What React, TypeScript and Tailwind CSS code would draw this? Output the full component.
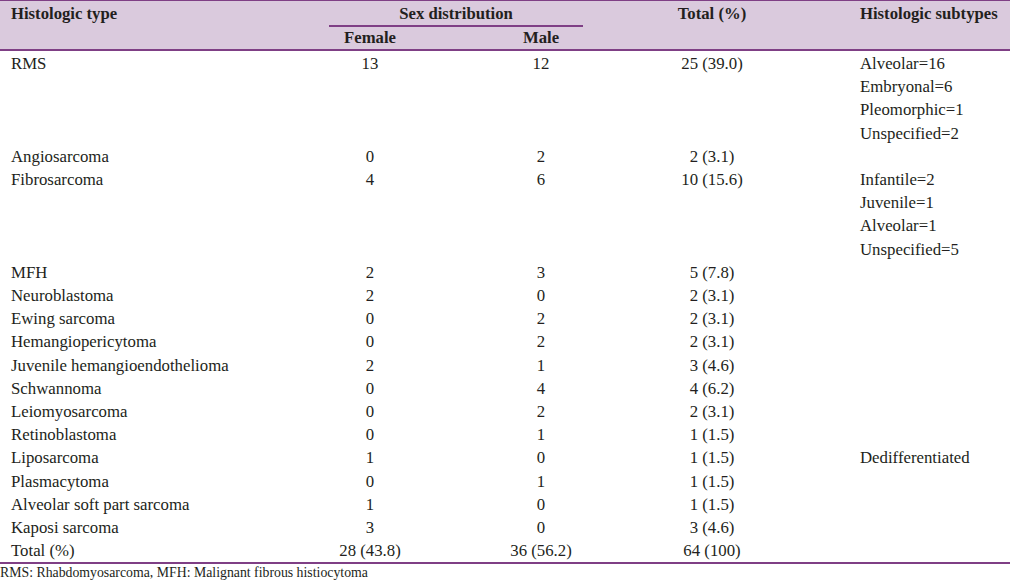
import React from "react";

const ROWS = [
  { type: "RMS", female: "13", male: "12", total: "25 (39.0)", sub: ["Alveolar=16", "Embryonal=6", "Pleomorphic=1", "Unspecified=2"] },
  { type: "Angiosarcoma", female: "0", male: "2", total: "2 (3.1)", sub: [] },
  { type: "Fibrosarcoma", female: "4", male: "6", total: "10 (15.6)", sub: ["Infantile=2", "Juvenile=1", "Alveolar=1", "Unspecified=5"] },
  { type: "MFH", female: "2", male: "3", total: "5 (7.8)", sub: [] },
  { type: "Neuroblastoma", female: "2", male: "0", total: "2 (3.1)", sub: [] },
  { type: "Ewing sarcoma", female: "0", male: "2", total: "2 (3.1)", sub: [] },
  { type: "Hemangiopericytoma", female: "0", male: "2", total: "2 (3.1)", sub: [] },
  { type: "Juvenile hemangioendothelioma", female: "2", male: "1", total: "3 (4.6)", sub: [] },
  { type: "Schwannoma", female: "0", male: "4", total: "4 (6.2)", sub: [] },
  { type: "Leiomyosarcoma", female: "0", male: "2", total: "2 (3.1)", sub: [] },
  { type: "Retinoblastoma", female: "0", male: "1", total: "1 (1.5)", sub: [] },
  { type: "Liposarcoma", female: "1", male: "0", total: "1 (1.5)", sub: ["Dedifferentiated"] },
  { type: "Plasmacytoma", female: "0", male: "1", total: "1 (1.5)", sub: [] },
  { type: "Alveolar soft part sarcoma", female: "1", male: "0", total: "1 (1.5)", sub: [] },
  { type: "Kaposi sarcoma", female: "3", male: "0", total: "3 (4.6)", sub: [] },
  { type: "Total (%)", female: "28 (43.8)", male: "36 (56.2)", total: "64 (100)", sub: [] },
];

const COLS = "grid grid-cols-[320px_100px_70px_102px_240px_1fr]";

export default function App() {
  return (
    <div className="w-[1010px] h-[581px] overflow-hidden bg-white text-[#231f20] text-[16.8px] font-['Liberation_Serif','Times_New_Roman',serif]">
      {/* Header */}
      <div className="bg-[#dacadd] border-t border-b-2 border-[#7f3f85] font-bold text-[16.7px]">
        <div className={`${COLS} h-[25px] leading-[23px]`}>
          <div className="pl-[11px] pt-[1px]">Histologic type</div>
          <div className="col-span-3 mx-[9px] pt-[1px] text-center border-b-2 border-[#7f3f85]">
            Sex distribution
          </div>
          <div className="pt-[1px] text-center">Total (%)</div>
          <div className="pl-[28px] pt-[1px]">Histologic subtypes</div>
        </div>
        <div className={`${COLS} h-[23px] leading-[23px]`}>
          <div />
          <div className="text-center">Female</div>
          <div />
          <div className="text-center">Male</div>
          <div />
          <div />
        </div>
      </div>

      {/* Body */}
      <div className="border-b-2 border-[#7f3f85] leading-[23.2px] pt-[1px]">
        {ROWS.map((r) => (
          <div key={r.type} className={COLS}>
            <div className="pl-[11px]">{r.type}</div>
            <div className="text-center whitespace-nowrap">{r.female}</div>
            <div />
            <div className="text-center whitespace-nowrap">{r.male}</div>
            <div className="text-center">{r.total}</div>
            <div className="pl-[28px]">
              {r.sub.map((s) => (
                <div key={s}>{s}</div>
              ))}
            </div>
          </div>
        ))}
      </div>

      <p className="text-[13.8px] leading-[18px]">
        RMS: Rhabdomyosarcoma, MFH: Malignant fibrous histiocytoma
      </p>
    </div>
  );
}
